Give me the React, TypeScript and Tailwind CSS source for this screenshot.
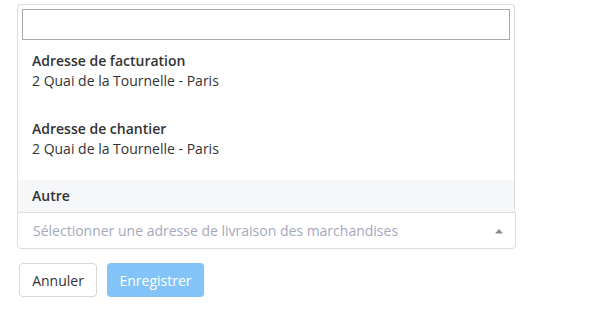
export default function App() {
  const options = [
    { title: "Adresse de facturation", address: "2 Quai de la Tournelle - Paris" },
    { title: "Adresse de chantier", address: "2 Quai de la Tournelle - Paris" },
  ];

  return (
    <div className="w-[602px] h-[319px] bg-white font-['Open_Sans',sans-serif] text-[14px] text-[#333]">
      <div className="pt-[4px] pl-[17px] w-[516px]">
        {/* open dropdown panel */}
        <div className="w-[498px] border border-b-0 border-[#dcdde2] rounded-t-[4px] bg-white">
          <div className="px-[4px] pt-[4px] pb-[4px]">
            <input className="block w-full h-[31px] border border-[#aaa] outline-none px-2" />
          </div>
          {options.map((o) => (
            <div key={o.title} className="h-[68px] px-[14px] pt-[7px] leading-[20px]">
              <div className="font-semibold">{o.title}</div>
              <div>{o.address}</div>
            </div>
          ))}
          <div className="h-[32px] px-[14px] bg-[#f6f7f9] leading-[32px] font-semibold">Autre</div>
        </div>
        {/* select */}
        <div className="h-[37px] w-[499px] border border-[#dcdde2] rounded-b-[4px] flex items-center justify-between pl-[15px] pr-[11px]">
          <span className="text-[#a5a8bd]">Sélectionner une adresse de livraison des marchandises</span>
          <svg width="10" height="6" viewBox="0 0 10 6" className="mt-[1px]">
            <path d="M1 5.5 L5 1 L9 5.5 Z" fill="#8a8a8a" />
          </svg>
        </div>
      </div>
      <div className="flex gap-[10px] pl-[19px] pt-[14px]">
        <button className="h-[34px] w-[78px] border border-[#d6d7dc] rounded-[4px] bg-white text-[#333]">
          Annuler
        </button>
        <button className="h-[34px] w-[97px] rounded-[4px] bg-[#82c4f8] text-white">
          Enregistrer
        </button>
      </div>
    </div>
  );
}
